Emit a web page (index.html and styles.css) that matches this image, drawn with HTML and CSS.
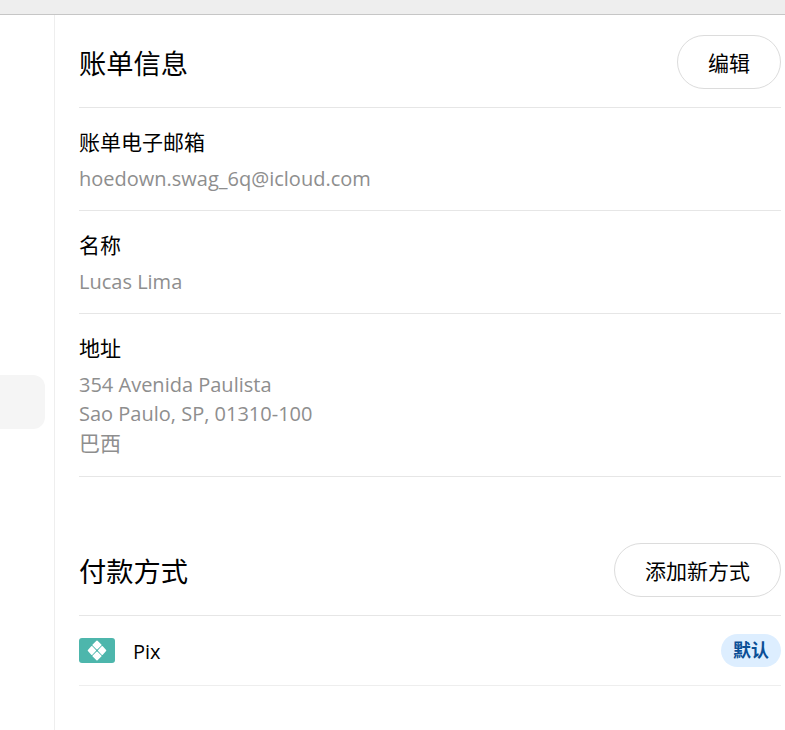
FILE: index.html
```html
<!DOCTYPE html>
<html>
<head>
    <title>账单信息</title>
    <link rel="stylesheet" href="styles.css">
</head>
<body>
    <div class="top-bar"></div>

    <div class="layout">
        <div class="sidebar">
            <div class="sidebar-item"></div>
        </div>

        <div class="main">
            <div class="section-header">
                <h2>账单信息</h2>
                <button type="button">编辑</button>
            </div>

            <div class="info-row">
                <div class="info-label">账单电子邮箱</div>
                <div class="info-value">hoedown.swag_6q@icloud.com</div>
            </div>

            <div class="info-row">
                <div class="info-label">名称</div>
                <div class="info-value">Lucas Lima</div>
            </div>

            <div class="info-row address-row">
                <div class="info-label">地址</div>
                <div class="info-value">354 Avenida Paulista<br>Sao Paulo, SP, 01310-100<br><span class="cjk">巴西</span></div>
            </div>

            <div class="section-header payment-header">
                <h2>付款方式</h2>
                <button type="button">添加新方式</button>
            </div>

            <div class="payment-row">
                <svg class="pix-logo" width="36" height="25" viewBox="0 0 36 25">
                    <rect width="36" height="25" rx="3" fill="#4db6ac"/>
                    <g fill="#fff" stroke="#fff" stroke-width="1.6" stroke-linejoin="round">
                        <path d="M18 3.4 L21.8 7 L18 10.6 L14.2 7 Z"/>
                        <path d="M18 14.4 L21.8 18 L18 21.6 L14.2 18 Z"/>
                        <path d="M12.8 8.9 L16.3 12.5 L12.8 16.1 L9.5 12.5 Z"/>
                        <path d="M23.2 8.9 L26.5 12.5 L23.2 16.1 L19.7 12.5 Z"/>
                    </g>
                </svg>
                <span class="payment-name">Pix</span>
                <span class="badge">默认</span>
            </div>
        </div>
    </div>
</body>
</html>
```

FILE: styles.css
```css
* {
    box-sizing: border-box;
}

html, body {
    height: 100%;
}

body {
    margin: 0;
    background-color: white;
    color: #000;
    font-family: "Open Sans", "Noto Sans CJK SC", sans-serif;
    overflow: hidden;
    display: flex;
    flex-direction: column;
}

.top-bar {
    height: 15px;
    background-color: #eeeeee;
    border-bottom: 1px solid #c6c6c6;
}

.layout {
    display: flex;
    flex: 1;
}

.sidebar {
    width: 55px;
    padding-top: 360px;
    border-right: 1px solid #eeeeee;
}

.sidebar-item {
    width: 45px;
    height: 54px;
    background-color: #f5f5f5;
    border-radius: 0 12px 12px 0;
}

.main {
    flex: 1;
    padding: 0 4px 0 24px;
}

.section-header {
    display: flex;
    justify-content: space-between;
    align-items: center;
    padding: 20px 0 18px;
    border-bottom: 1px solid #e6e6e6;
}

.payment-header {
    margin-top: 46px;
}

h2 {
    margin: 0;
    font-size: 27.25px;
    font-weight: 400;
}

button {
    height: 54px;
    padding: 0 30px;
    font-family: inherit;
    font-size: 21px;
    color: #000;
    background-color: white;
    border: 1px solid #dcdcdc;
    border-radius: 27px;
}

.info-row {
    display: flex;
    flex-direction: column;
    gap: 7px;
    padding: 20px 0 16px;
    border-bottom: 1px solid #e6e6e6;
}

.address-row {
    padding-bottom: 18px;
}

.info-label {
    font-size: 21px;
    line-height: 29.4px;
}

.info-value {
    font-size: 20px;
    line-height: 29.4px;
    color: #8e8e8e;
}

.cjk {
    font-size: 21px;
}

.payment-row {
    display: flex;
    align-items: center;
    height: 70px;
    border-bottom: 1px solid #eeeeee;
}

.pix-logo {
    margin-right: 18px;
}

.payment-name {
    flex: 1;
    padding-top: 2px;
    font-size: 20px;
}

.badge {
    width: 60px;
    height: 33px;
    line-height: 33px;
    text-align: center;
    font-size: 18px;
    font-weight: 700;
    color: #0a4f96;
    background-color: #ddeeff;
    border-radius: 17px;
}
```
